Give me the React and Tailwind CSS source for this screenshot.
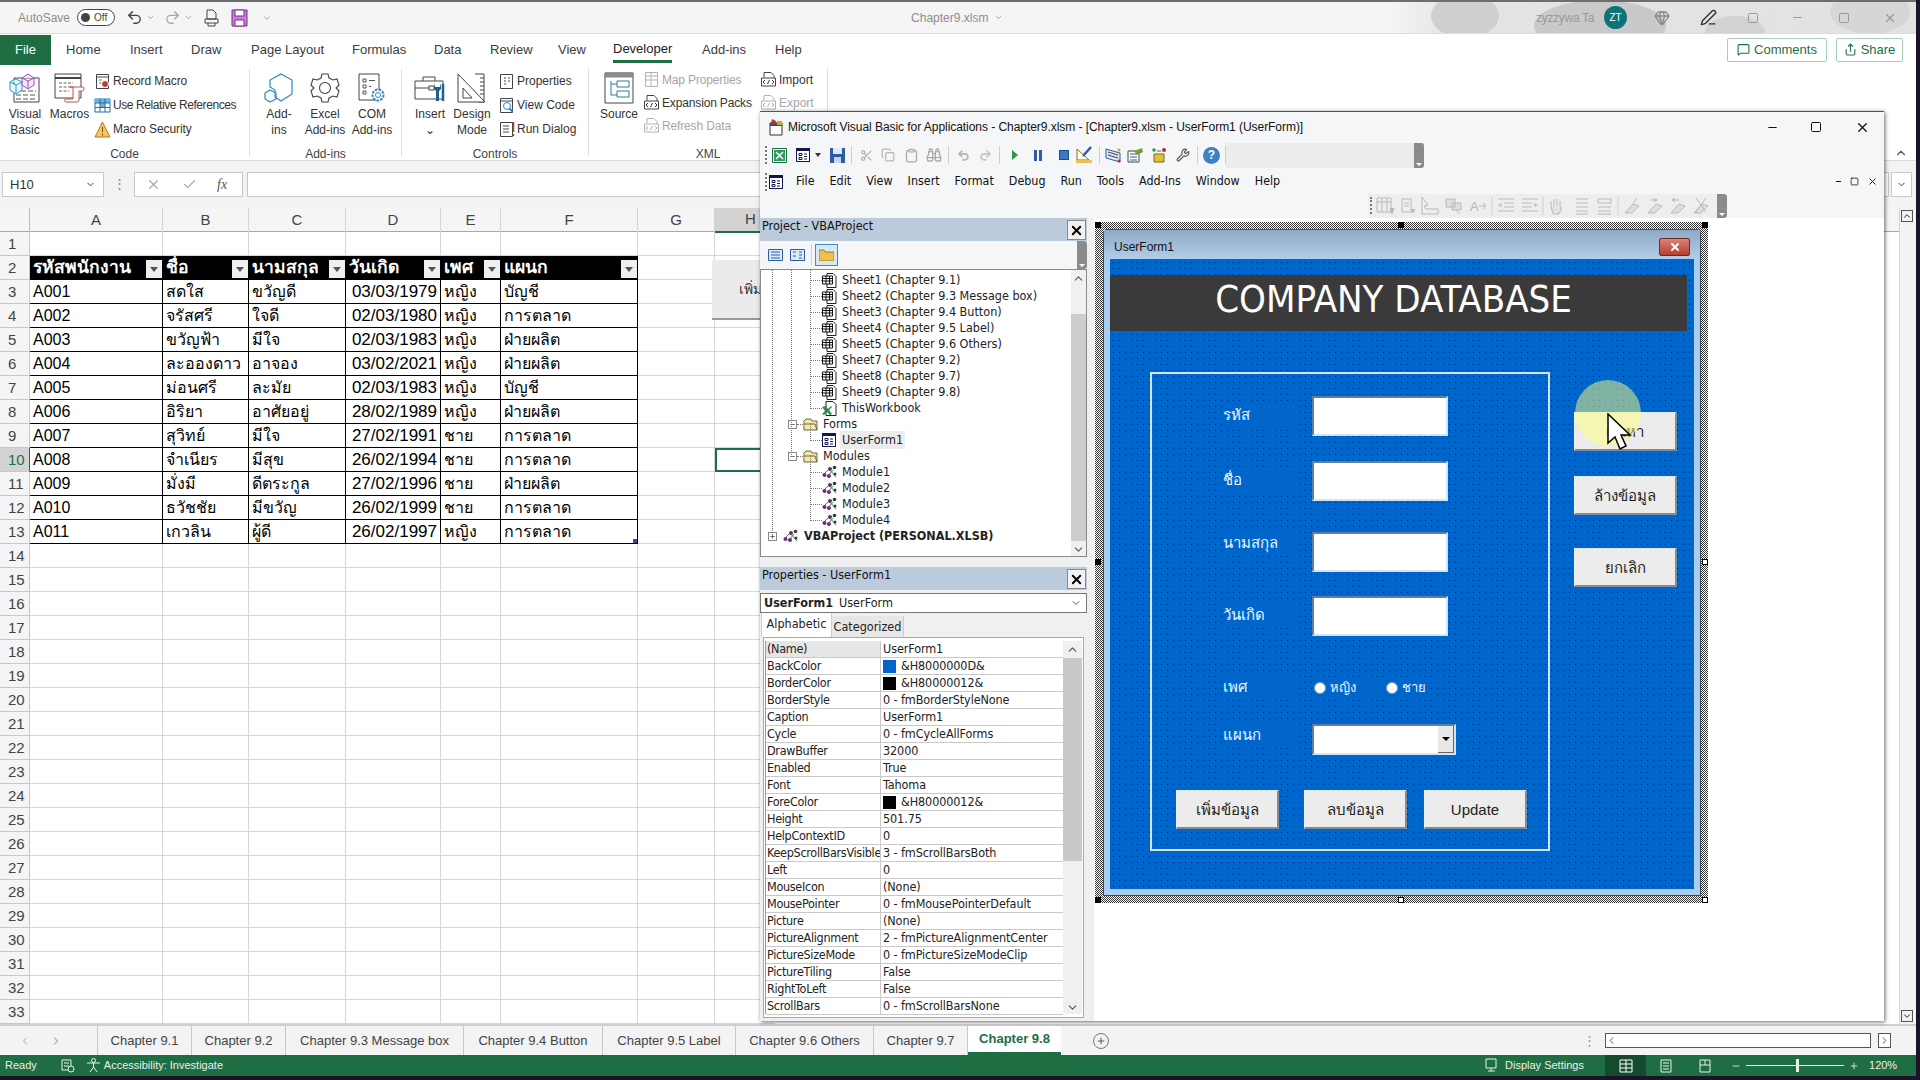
import {
  ChevronDown,
  ChevronUp,
  ChevronLeft,
  ChevronRight,
  Check,
  X,
  Plus,
  Minus,
  Square,
  Undo2,
  Redo2,
  MessageSquare,
  Share,
  Gem,
  PenLine,
  Scissors,
  Copy,
  Clipboard,
  Binoculars,
  Wrench,
} from "lucide-react";

const sheetCols = "grid-cols-[30px_133px_86px_97px_95px_60px_137px_77px_1fr]";
const tahoma = "[font-family:'DejaVu_Sans','Liberation_Sans',sans-serif] [font-stretch:condensed]";

const people = [
  ["A001", "สดใส", "ขวัญดี", "03/03/1979", "หญิง", "บัญชี"],
  ["A002", "จรัสศรี", "ใจดี", "02/03/1980", "หญิง", "การตลาด"],
  ["A003", "ขวัญฟ้า", "มีใจ", "02/03/1983", "หญิง", "ฝ่ายผลิต"],
  ["A004", "ละอองดาว", "อาจอง", "03/02/2021", "หญิง", "ฝ่ายผลิต"],
  ["A005", "ม่อนศรี", "ละมัย", "02/03/1983", "หญิง", "บัญชี"],
  ["A006", "อิริยา", "อาศัยอยู่", "28/02/1989", "หญิง", "ฝ่ายผลิต"],
  ["A007", "สุวิทย์", "มีใจ", "27/02/1991", "ชาย", "การตลาด"],
  ["A008", "จำเนียร", "มีสุข", "26/02/1994", "ชาย", "การตลาด"],
  ["A009", "มั่งมี", "ดีตระกูล", "27/02/1996", "ชาย", "ฝ่ายผลิต"],
  ["A010", "ธวัชชัย", "มีขวัญ", "26/02/1999", "ชาย", "การตลาด"],
  ["A011", "เกวลิน", "ผู้ดี", "26/02/1997", "หญิง", "การตลาด"],
];

const headers = ["รหัสพนักงาน", "ชื่อ", "นามสกุล", "วันเกิด", "เพศ", "แผนก"];

const props = [
  ["(Name)", "UserForm1"],
  ["BackColor", "&H8000000D&", "bg-[#0066cc]"],
  ["BorderColor", "&H80000012&", "bg-black"],
  ["BorderStyle", "0 - fmBorderStyleNone"],
  ["Caption", "UserForm1"],
  ["Cycle", "0 - fmCycleAllForms"],
  ["DrawBuffer", "32000"],
  ["Enabled", "True"],
  ["Font", "Tahoma"],
  ["ForeColor", "&H80000012&", "bg-black"],
  ["Height", "501.75"],
  ["HelpContextID", "0"],
  ["KeepScrollBarsVisible", "3 - fmScrollBarsBoth"],
  ["Left", "0"],
  ["MouseIcon", "(None)"],
  ["MousePointer", "0 - fmMousePointerDefault"],
  ["Picture", "(None)"],
  ["PictureAlignment", "2 - fmPictureAlignmentCenter"],
  ["PictureSizeMode", "0 - fmPictureSizeModeClip"],
  ["PictureTiling", "False"],
  ["RightToLeft", "False"],
  ["ScrollBars", "0 - fmScrollBarsNone"],
];

const tabs = [
  ["Home", "w-[64px]"],
  ["Insert", "w-[61px]"],
  ["Draw", "w-[60px]"],
  ["Page Layout", "w-[101px]"],
  ["Formulas", "w-[82px]"],
  ["Data", "w-[56px]"],
  ["Review", "w-[68px]"],
  ["View", "w-[55px]"],
];

const sheets = [
  ["Chapter 9.1", "w-[94px]"],
  ["Chapter 9.2", "w-[94px]"],
  ["Chapter 9.3 Message box", "w-[178px]"],
  ["Chapter 9.4 Button", "w-[139px]"],
  ["Chapter 9.5 Label", "w-[133px]"],
  ["Chapter 9.6 Others", "w-[138px]"],
  ["Chapter 9.7", "w-[94px]"],
];

const SheetIcon = () => (
  <svg width="15" height="15" viewBox="0 0 15 15" className="shrink-0">
    <path d="M5 0.500h6l3 3v11H5z" fill="#fff" stroke="#222" />
    <path d="M0.500 3h10v8h-10z" fill="#fff" stroke="#111" />
    <path d="M0.500 5.500h10M0.500 8h10M4 3v8M7.500 3v8" stroke="#111" />
  </svg>
);

const WorkbookIcon = () => (
  <svg width="15" height="15" viewBox="0 0 15 15" className="shrink-0">
    <path d="M4 0.500h7l3 3v11H4z" fill="#fff" stroke="#222" />
    <path d="M0 6l4-1 2 3 3-3 1 1-3 3 3 4-2 1-3-3-3 3-2-1 3-3z" fill="#2e8b57" />
  </svg>
);

const ModuleIcon = () => (
  <svg width="16" height="15" viewBox="0 0 16 15" className="shrink-0">
    <path d="M1 10l6-6 7 8M5 12l6-7" fill="none" stroke="#3f8f44" />
    <circle cx="2.500" cy="10" r="2" fill="#6b2d7c" />
    <circle cx="7" cy="11" r="2" fill="#6b2d7c" />
    <circle cx="8" cy="4" r="2" fill="#6b2d7c" />
    <circle cx="12.500" cy="2.500" r="1.800" fill="#3b3b3b" />
    <circle cx="13" cy="9" r="1.500" fill="#3b3b3b" />
  </svg>
);

const FolderIcon = () => (
  <svg width="15" height="13" viewBox="0 0 15 13" className="shrink-0">
    <path d="M1 3l2-2h5l1 2h5v9H1z" fill="#f2e9a6" stroke="#6d6a45" />
    <path d="M1 6h11l2 6" fill="none" stroke="#6d6a45" />
  </svg>
);

const FormIcon = () => (
  <svg width="14" height="14" viewBox="0 0 14 14" className="shrink-0">
    <rect x="0.500" y="0.500" width="13" height="13" fill="#fff" stroke="#16164e" />
    <path d="M1 1h12v2H1z" fill="#16164e" />
    <path d="M3 5.500h3v2H3zM3 9.500h3v2H3zM8 6h3M8 8.500h3M8 11h3" stroke="#16164e" fill="none" />
  </svg>
);

const VisualBasicIcon = () => (
  <svg width="32" height="30" viewBox="0 0 32 30" fill="none">
    <path d="M5 5h25v24H5z" fill="#fff" stroke="#444" />
    <path d="M12 18h15M7 22h20M7 26h20" stroke="#555" strokeDasharray="5 2" />
    <path d="M1 9l6-3 6 3v8l-6 4-6-4zM1 9l6 3 6-3M7 12v9" fill="#e8f5fb" stroke="#2b9ac4" />
    <path d="M13 5l6-4 6 4v7l-6 4-6-4zM13 5l6 3 6-3M19 8v8" fill="#f4e8f7" stroke="#9b4fb5" />
  </svg>
);

const MacrosIcon = () => (
  <svg width="32" height="30" viewBox="0 0 32 30" fill="none">
    <path d="M1 1h26v24H1z" fill="#fff" stroke="#444" />
    <path d="M1 5h26" stroke="#444" strokeWidth="2" />
    <path d="M5 10h14M5 14h12M5 18h10" stroke="#666" strokeDasharray="3 1.500" />
    <path d="M16 14h13c1.500 0 1.500 4-1 4h-3v9c0 2-2 2-3 2H12c-2 0-2.500-3 0-3h7V14z" fill="#fff" stroke="#b5544c" />
  </svg>
);

const HexIcon = () => (
  <svg width="30" height="30" viewBox="0 0 30 30" fill="none" stroke="#2e86c1" strokeWidth="1.200">
    <path d="M17 1l11 6v14l-11 7-6-4v-7l-5-3V7z" />
    <path d="M6 17l6 3v6l-6 3-5-3v-6z" />
  </svg>
);

const GearIcon = () => (
  <svg width="30" height="30" viewBox="0 0 30 30" fill="none" stroke="#444" strokeWidth="1.100">
    <path d="M12 1h6l1 4 4 2 4-1 2 6-3 3 3 3-2 6-4-1-4 2-1 4h-6l-1-4-4-2-4 1-2-6 3-3-3-3 2-6 4 1 4-2z" />
    <circle cx="15" cy="15" r="5.500" />
  </svg>
);

const ComIcon = () => (
  <svg width="30" height="30" viewBox="0 0 30 30" fill="none">
    <path d="M2 1h20v26H2z" fill="#fff" stroke="#444" />
    <path d="M6 6h3v3H6zM6 12h3v3H6zM6 18h3v3H6zM12 7.500h6M12 13.500h2" stroke="#555" />
    <circle cx="21" cy="22" r="5.500" fill="#fff" stroke="#2e86c1" strokeWidth="2" strokeDasharray="2.500 1.200" />
    <circle cx="21" cy="22" r="2.500" stroke="#2e86c1" />
  </svg>
);

const ToolboxIcon = () => (
  <svg width="32" height="28" viewBox="0 0 32 28" fill="none">
    <path d="M1 7h28v18H1zM9 7V3h12v4M1 14h14" stroke="#444" fill="#fff" />
    <path d="M15 12h5v4h-5z" stroke="#444" />
    <path d="M20 9v6l2 2v10h3V17l2-2V9l-1 4h-5z" fill="#1f5f8f" />
    <path d="M29 10v17" stroke="#1f5f8f" strokeWidth="2.500" />
  </svg>
);

const DesignIcon = () => (
  <svg width="30" height="30" viewBox="0 0 30 30" fill="none" stroke="#444">
    <path d="M18 1h9v28h-6" fill="#fff" />
    <path d="M23 5h4M23 9h4M23 13h4M23 17h4M23 21h4" />
    <path d="M1 1l27 28H1z" fill="#fff" />
    <path d="M6 15l9 10H6z" />
  </svg>
);

const SourceIcon = () => (
  <svg width="30" height="32" viewBox="0 0 30 32" fill="none" stroke="#2a7f9c">
    <path d="M1 1h28v30H1z" stroke="#444" fill="#fff" />
    <path d="M1 1h28v4H1z" fill="#8a8a8a" stroke="#8a8a8a" />
    <path d="M13 9h12v6H13zM13 19h12v6H13zM7 9v14h6M7 12h6" />
  </svg>
);

const MiniIcon = ({ children, muted }) => (
  <svg width="17" height="17" viewBox="0 0 17 17" fill="none" className={`shrink-0 ${muted ? "opacity-40" : ""}`}>
    {children}
  </svg>
);

const Doc = () => <path d="M2.500 1.500h12v14h-12z" fill="#fff" stroke="#444" />;

const XmlBadge = () => (
  <>
    <path d="M4 1.500h7l3 3v4M4 1.500v5" stroke="#444" />
    <path d="M1.500 7h14v8h-14z" fill="#fff" stroke="#444" />
    <path d="M5 9l-2 2 2 2M12 9l2 2-2 2M9.500 9l-2 4" stroke="#333" />
  </>
);

const RibbonSmall = ({ icon, label, muted, className = "h-6" }) => (
  <div className={`flex items-center gap-[2px] whitespace-nowrap text-[12px] ${muted ? "text-[#a6a6a6]" : "text-[#333]"} ${className}`}>
    {icon}
    <span>{label}</span>
  </div>
);

const BigButton = ({ icon, lines, width }) => (
  <div className={`flex shrink-0 flex-col items-center pt-[3px] text-[12px] leading-4 text-[#333] ${width}`}>
    <div className="flex h-[32px] items-center">{icon}</div>
    <div className="mt-[2px] text-center whitespace-nowrap">
      {lines.map((l) => (
        <div key={l}>{l}</div>
      ))}
    </div>
  </div>
);

const RibbonGroup = ({ label, width, children }) => (
  <div className={`relative my-[4px] flex shrink-0 flex-col border-r border-[#dcdcdc] ${width}`}>
    <div className="flex h-[77px]">{children}</div>
    <div className="absolute top-[76px] right-0 left-0 text-center text-[12px] text-[#444]">{label}</div>
  </div>
);

function TitleBar() {
  return (
    <div className="relative flex h-[34px] shrink-0 items-center overflow-hidden border-t-2 border-b border-t-[#6e6e6e] border-b-[#dcdcdc] bg-[#f5f5f5] text-[12px] text-[#8d8d8d]">
      <svg className="absolute top-0 left-[1390px]" width="526" height="34" viewBox="0 0 526 34">
        <defs>
          <linearGradient id="fade" x1="0" x2="1" y1="0" y2="0">
            <stop offset="0" stopColor="#f5f5f5" />
            <stop offset="0.12" stopColor="#e4e4e4" />
            <stop offset="1" stopColor="#e2e2e2" />
          </linearGradient>
        </defs>
        <rect width="526" height="34" fill="url(#fade)" />
        <ellipse cx="75" cy="14" rx="34" ry="22" fill="#cfcfcf" />
        <ellipse cx="210" cy="24" rx="66" ry="26" fill="#c9c9c9" />
        <ellipse cx="345" cy="30" rx="30" ry="16" fill="#d2d2d2" />
        <ellipse cx="480" cy="10" rx="40" ry="22" fill="#d6d6d6" />
      </svg>
      <span className="ml-[18px]">AutoSave</span>
      <div className="ml-[7px] flex h-[17px] w-[38px] items-center rounded-full border border-[#444] bg-white pl-[3px] text-[10px] text-[#444]">
        <span className="h-[9px] w-[9px] rounded-full bg-[#444]" />
        <span className="ml-[4px]">Off</span>
      </div>
      <Undo2 size={17} className="ml-[11px] text-[#444]" />
      <ChevronDown size={9} className="ml-[3px]" />
      <Redo2 size={17} className="ml-[9px] text-[#aaa]" />
      <ChevronDown size={9} className="ml-[3px]" />
      <svg width="15" height="18" viewBox="0 0 15 18" fill="none" stroke="#444" className="ml-[11px]">
        <path d="M3 1h6l3 3v6H3zM1 10h13v4H1zM4 14v3h7v-3" />
      </svg>
      <svg width="17" height="18" viewBox="0 0 17 18" className="ml-[12px]">
        <path d="M1 1h15v16H1z" fill="#c77fd6" stroke="#7a2d92" />
        <path d="M4 1h9v6H4zM4 11h9v6H4z" fill="#fff" stroke="#7a2d92" />
      </svg>
      <ChevronDown size={10} className="ml-[14px]" />
      <div className="relative ml-[639px] flex w-[120px] items-center gap-[6px]">
        <span>Chapter9.xlsm</span>
        <ChevronDown size={9} />
      </div>
      <span className="relative ml-[505px] w-[68px] tracking-[-0.3px] text-[#999]">zyzzywa Ta</span>
      <div className="relative flex h-[23px] w-[23px] items-center justify-center rounded-full bg-[#0d7377] text-[10px] text-white">ZT</div>
      <Gem size={16} className="relative ml-[27px] text-[#888]" />
      <PenLine size={17} className="relative ml-[30px] text-[#333]" />
      <Square size={12} className="relative ml-[30px] text-[#999]" />
      <Minus size={13} className="relative ml-[32px] text-[#999]" />
      <Square size={12} className="relative ml-[34px] text-[#999]" />
      <X size={14} className="relative ml-[33px] text-[#999]" />
    </div>
  );
}

function TabStrip() {
  return (
    <div className="flex h-[31px] shrink-0 items-center bg-white text-[13px] text-[#3c3c3c]">
      <div className="flex h-[30px] w-[51px] items-center justify-center bg-[#1f6e43] text-white">File</div>
      <div className="flex pl-[15px]">
        {tabs.map(([t, w]) => (
          <span key={t} className={w}>{t}</span>
        ))}
      </div>
      <div className="w-[89px] pt-[3px]">
        <span className="inline-block border-b-[3px] border-[#1f6e43] pb-[1px] font-medium text-[#222]">Developer</span>
      </div>
      <span className="w-[73px]">Add-ins</span>
      <span>Help</span>
      <div className="mr-[13px] ml-auto flex gap-[9px] text-[#1f6e43]">
        <div className="flex h-[24px] w-[100px] items-center justify-center gap-[4px] rounded-[2px] border border-[#a9cdb9]">
          <MessageSquare size={13} /> Comments
        </div>
        <div className="flex h-[24px] w-[67px] items-center justify-center gap-[4px] rounded-[2px] border border-[#a9cdb9]">
          <Share size={13} /> Share
        </div>
      </div>
    </div>
  );
}

function Ribbon() {
  return (
    <div className="flex h-[96px] shrink-0 border-b border-[#d9d9d9] bg-white">
      <RibbonGroup label="Code" width="w-[250px]">
        <div className="flex pl-[8px]">
          <BigButton icon={<VisualBasicIcon />} lines={["Visual", "Basic"]} width="w-[34px]" />
        </div>
        <div className="ml-[5px]">
          <BigButton icon={<MacrosIcon />} lines={["Macros"]} width="w-[45px]" />
        </div>
        <div className="ml-[2px] tracking-[-0.1px]">
          <RibbonSmall label="Record Macro" icon={<MiniIcon><Doc /><path d="M3 4h11" stroke="#444" /><path d="M5 7h3M5 10h2" stroke="#777" /><circle cx="11" cy="11" r="3.500" fill="#c0392b" stroke="#fff" /></MiniIcon>} />
          <div className="tracking-[-0.42px]">
            <RibbonSmall label="Use Relative References" icon={<MiniIcon><path d="M1 2h15v13H1z" fill="#fff" stroke="#1c6fa8" /><path d="M1 2h15v4H1zM6 6h5v4H6z" fill="#6fb2e0" /><path d="M1 6h15M1 10.500h15M6 2v13M11 2v13" stroke="#1c6fa8" /></MiniIcon>} />
          </div>
          <RibbonSmall label="Macro Security" icon={<MiniIcon><path d="M8.500 1L16 16H1z" fill="#f6c65b" stroke="#b7791f" /><path d="M8.500 6v5M8.500 12.500v2" stroke="#7a4a00" /></MiniIcon>} />
        </div>
      </RibbonGroup>
      <RibbonGroup label="Add-ins" width="w-[152px]">
        <div className="flex pl-[6px]">
          <BigButton icon={<HexIcon />} lines={["Add-", "ins"]} width="w-[46px]" />
          <BigButton icon={<GearIcon />} lines={["Excel", "Add-ins"]} width="w-[46px]" />
          <BigButton icon={<ComIcon />} lines={["COM", "Add-ins"]} width="w-[48px]" />
        </div>
      </RibbonGroup>
      <RibbonGroup label="Controls" width="w-[187px]">
        <div className="flex pl-[8px]">
          <BigButton icon={<ToolboxIcon />} lines={["Insert", "⌄"]} width="w-[40px]" />
          <BigButton icon={<DesignIcon />} lines={["Design", "Mode"]} width="w-[44px]" />
        </div>
        <div className="ml-[4px]">
          <RibbonSmall label="Properties" icon={<MiniIcon><Doc /><path d="M6 5h2M6 8h2M6 11h2M10 5h2M10 8h2" stroke="#444" /></MiniIcon>} />
          <RibbonSmall label="View Code" icon={<MiniIcon><Doc /><path d="M3 4h11" stroke="#444" /><circle cx="9" cy="9" r="3.500" stroke="#2e86c1" /><path d="M11.500 11.500l3 3" stroke="#2e86c1" strokeWidth="2" /></MiniIcon>} />
          <RibbonSmall label="Run Dialog" icon={<MiniIcon><Doc /><path d="M5 5h6M5 8h6M5 11h6" stroke="#444" /><path d="M15.500 1v10M15.500 13v2" stroke="#c0392b" strokeWidth="1.500" /></MiniIcon>} />
        </div>
      </RibbonGroup>
      <RibbonGroup label="XML" width="w-[239px]">
        <div className="w-[54px]">
          <BigButton icon={<SourceIcon />} lines={["Source"]} width="w-[60px]" />
        </div>
        <div className="mt-[-1px] w-[117px] tracking-[-0.15px]">
          <RibbonSmall muted className="h-[23px]" label="Map Properties" icon={<MiniIcon muted><Doc /><path d="M3 5h11M3 9h11M8 1v14" stroke="#444" /></MiniIcon>} />
          <RibbonSmall className="h-[23px]" label="Expansion Packs" icon={<MiniIcon><XmlBadge /></MiniIcon>} />
          <RibbonSmall muted className="h-[23px]" label="Refresh Data" icon={<MiniIcon muted><XmlBadge /></MiniIcon>} />
        </div>
        <div className="mt-[-1px]">
          <RibbonSmall className="h-[23px]" label="Import" icon={<MiniIcon><XmlBadge /></MiniIcon>} />
          <RibbonSmall muted className="h-[23px]" label="Export" icon={<MiniIcon muted><XmlBadge /></MiniIcon>} />
        </div>
      </RibbonGroup>
      <div className="ml-auto flex items-end pr-[8px]">
        <ChevronUp size={14} className="text-[#555]" />
      </div>
    </div>
  );
}

function FormulaBar() {
  return (
    <div className="flex h-[47px] shrink-0 items-start bg-[#f3f3f3] pt-[11px] pl-[2px] text-[13px] text-[#333]">
      <div className="flex h-[25px] w-[102px] items-center justify-between border border-[#c8c8c8] bg-white px-[7px]">
        H10 <ChevronDown size={11} />
      </div>
      <span className="w-[30px] text-center leading-6 text-[#888]">⋮</span>
      <div className="flex h-[25px] w-[109px] items-center border border-[#c8c8c8] bg-white text-[#aaa]">
        <X size={15} className="ml-[11px]" />
        <Check size={15} className="ml-[21px]" />
        <span className="ml-[20px] font-['Liberation_Serif'] text-[14px] text-[#555] italic">fx</span>
      </div>
      <div className="ml-[4px] h-[25px] flex-1 border border-[#c8c8c8] bg-white" />
      <div className="mr-[4px] ml-[2px] flex h-[25px] w-[21px] items-center justify-center border border-[#c8c8c8] bg-white">
        <ChevronDown size={11} />
      </div>
    </div>
  );
}

function SpreadSheet() {
  const letters = ["A", "B", "C", "D", "E", "F", "G"];
  const gridLine = "border-r border-b border-[#d6d6d6]";
  return (
    <div className="flex h-[816px] shrink-0 bg-white">
      <div className="flex-1 overflow-hidden">
        <div className={`grid h-[24px] ${sheetCols} border-b border-[#a8a8a8] bg-[#f5f5f5] text-[15px] text-[#444]`}>
          <div className="border-r border-[#bbb]" />
          {letters.map((c) => (
            <div key={c} className="flex items-center justify-center border-r border-[#d6d6d6]">{c}</div>
          ))}
          <div className="w-[45px] border-b-2 border-[#1f6e43] bg-[#d3d3d3] pl-[30px] text-[#444]">H</div>
        </div>
        {Array.from({ length: 33 }, (_, i) => {
          const rowNo = i + 1;
          const record = rowNo >= 3 && rowNo <= 13 ? people[rowNo - 3] : null;
          const isHead = rowNo === 2;
          return (
            <div key={rowNo} className={`grid h-[24px] ${sheetCols} text-[16px] leading-[23px] text-black`}>
              <div className={`border-r border-b border-[#c8c8c8] pl-[8px] text-[15px] ${rowNo === 10 ? "border-r-[#1f6e43] bg-[#d3d3d3] text-[#1f6e43]" : "bg-[#f5f5f5] text-[#444]"}`}>{rowNo}</div>
              {[0, 1, 2, 3, 4, 5].map((c) => {
                if (isHead) {
                  return (
                    <div key={c} className="relative overflow-hidden border-b border-black bg-black pl-[3px] text-[17.5px] font-bold whitespace-nowrap text-white">
                      {headers[c]}
                      <span className="absolute top-[4px] right-[1px] flex h-[18px] w-[16px] items-center justify-center bg-[#efefef]">
                        <span className="border-x-[4px] border-t-[5px] border-x-transparent border-t-[#555]" />
                      </span>
                    </div>
                  );
                }
                if (record) {
                  return (
                    <div key={c} className={`relative overflow-hidden border-r border-b border-black whitespace-nowrap ${c === 3 ? "pr-[3px] text-right text-[17px]" : "pl-[3px]"}`}>
                      {record[c]}
                      {rowNo === 13 && c === 5 && <span className="absolute right-0 bottom-0 h-[4px] w-[4px] bg-[#3b4a8c]" />}
                    </div>
                  );
                }
                return <div key={c} className={gridLine} />;
              })}
              <div className={gridLine} />
              <div className={rowNo === 10 ? "w-[60px] border-2 border-[#1f6e43]" : "w-[60px] border-b border-[#d6d6d6]"} />
            </div>
          );
        })}
      </div>
      <div className="flex w-[17px] flex-col items-center justify-between border-l border-[#d6d6d6] bg-[#f3f3f3] py-[2px] pr-[3px]">
        <ChevronUp size={12} className="border border-[#555]" />
        <ChevronDown size={12} className="border border-[#555]" />
      </div>
    </div>
  );
}

function SheetTabs() {
  return (
    <div className="flex h-[31px] shrink-0 items-center border-t-2 border-[#cfcfcf] bg-[#f3f3f3] text-[13px] text-[#444]">
      <ChevronLeft size={12} className="ml-[19px] text-[#aaa]" />
      <ChevronRight size={12} className="ml-[19px] text-[#888]" />
      <div className="ml-[35px] flex h-full items-stretch border-l border-[#c8c8c8]">
        {sheets.map(([s, w]) => (
          <div key={s} className={`flex items-center justify-center border-r border-[#c8c8c8] whitespace-nowrap ${w}`}>{s}</div>
        ))}
        <div className="flex w-[93px] items-center justify-center border-b-[3px] border-[#1f6e43] bg-white font-bold text-[#1f6e43]">Chapter 9.8</div>
      </div>
      <div className="ml-[32px] flex h-[16px] w-[16px] items-center justify-center rounded-full border border-[#777]">
        <Plus size={10} />
      </div>
      <span className="ml-[474px] text-[#999]">⋮</span>
      <div className="ml-[9px] flex h-[15px] w-[266px] items-center justify-between border border-[#555] bg-white">
        <ChevronLeft size={11} />
      </div>
      <div className="ml-[7px] flex h-[15px] w-[13px] items-center justify-center border border-[#555] bg-white">
        <ChevronRight size={11} />
      </div>
    </div>
  );
}

function StatusBar() {
  return (
    <div className="flex h-[21px] shrink-0 items-center bg-[#1f6e43] text-[11px] text-[#e8f1ec]">
      <span className="ml-[5px]">Ready</span>
      <svg width="14" height="14" viewBox="0 0 14 14" fill="none" stroke="#e8f1ec" className="ml-[24px]">
        <path d="M1 1h9v10H1zM3 4h5M3 7h5" />
        <circle cx="10" cy="10" r="3" fill="#1f6e43" />
      </svg>
      <svg width="15" height="15" viewBox="0 0 15 15" fill="none" stroke="#e8f1ec" className="ml-[11px]">
        <circle cx="7.500" cy="2.500" r="2" />
        <path d="M1 5h13M7.500 5v4L4 14M7.500 9l3.500 5" />
      </svg>
      <span className="ml-[3px]">Accessibility: Investigate</span>
      <svg width="16" height="15" viewBox="0 0 16 15" fill="none" stroke="#e8f1ec" className="ml-[1262px]">
        <path d="M1 1h10v9H1zM6 10v3M3 13h7" />
      </svg>
      <span className="ml-[4px] w-[100px]">Display Settings</span>
      <div className="flex h-full w-[41px] items-center justify-center bg-[#144a2d]">
        <svg width="14" height="14" viewBox="0 0 14 14" fill="none" stroke="#fff"><path d="M1 1h12v12H1zM1 5h12M1 9h12M7 1v12" /></svg>
      </div>
      <svg width="14" height="14" viewBox="0 0 14 14" fill="none" stroke="#e8f1ec" className="ml-[13px]"><path d="M2 1h10v12H2zM4 4h6M4 7h6M4 10h6" /></svg>
      <svg width="14" height="14" viewBox="0 0 14 14" fill="none" stroke="#e8f1ec" className="ml-[25px]"><path d="M2 1h10v12H2zM2 6h10M7 1v5" /></svg>
      <Minus size={10} className="ml-[19px]" />
      <div className="relative ml-[5px] h-[1px] w-[98px] bg-[#e8f1ec]">
        <span className="absolute top-[-6px] left-[50px] h-[13px] w-[3px] bg-[#e8f1ec]" />
      </div>
      <Plus size={10} className="ml-[5px]" />
      <span className="ml-[10px]">120%</span>
    </div>
  );
}

const GripEnd = () => (
  <div className="flex h-full w-[10px] shrink-0 items-end justify-center rounded-r-[3px] bg-[#8b8b8b] pb-[2px]">
    <span className="border-x-[3px] border-t-[3px] border-x-transparent border-t-white" />
  </div>
);

const Sep = ({ className = "" }) => <span className={`h-[18px] border-l border-[#cfcfcf] ${className}`} />;

const Grip = () => <span className="h-[18px] w-[3px] border-l-2 border-dotted border-[#777]" />;

// Faded edit toolbar, all one drawing since the icons are near-identical grey marks
const EditToolbarIcons = () => (
  <svg width="340" height="20" viewBox="0 0 340 20" fill="none" stroke="#b9b9b9" className="shrink-0">
    <path d="M3 2h14v14H3zM3 6h14M8 2v14M13 2v14" />
    <path d="M16 12l2 6 2-6" fill="#b9b9b9" />
    <path d="M28 3h9v13h-9zM30 7h5M30 10h5" />
    <path d="M37 13l2 4 2-4" fill="#b9b9b9" />
    <path d="M48 1l6 8-4 1 2 3h12v5H48z" />
    <path d="M72 3h9v8h-9zM78 7h9v7h-9zM82 14l4 4" fill="#dedede" />
    <text x="96" y="15" fontSize="13" fill="#b9b9b9" stroke="none" fontFamily="Liberation Sans">A</text>
    <path d="M105 10h6M109 7l3 3-3 3" />
    <path d="M118 1v18" stroke="#cfcfcf" />
    <path d="M124 3h16M130 7h10M130 11h10M124 15h16M124 9h4M126 7l2 2-2 2" />
    <path d="M148 3h16M148 7h10M148 11h10M148 15h16M164 9h-4M162 7l-2 2 2 2" />
    <path d="M169 1v18" stroke="#cfcfcf" />
    <path d="M177 10V5M180 10V3M183 10V3M186 10V5M177 10l2 8h6l2-4v-4" fill="#e2e2e2" />
    <path d="M202 3h12M202 7h12M202 11h12M202 15h12M202 18h12" />
    <path d="M224 3h13v4h-13zM224 11h13M224 15h13M224 18h13" />
    <path d="M244 1v18" stroke="#cfcfcf" />
    <path d="M251 17l8-9 6 2-7 7zM259 8l4-6" fill="#dedede" />
    <path d="M274 17l8-9 6 2-7 7zM276 4h6M280 2l3 2-3 2" fill="#dedede" />
    <path d="M297 17l8-9 6 2-7 7zM299 4h6M301 2l-3 2 3 2" fill="#dedede" />
    <path d="M320 17l8-9 6 2-7 7zM322 2l10 14M332 2l-10 14" fill="#dedede" />
  </svg>
);

function VbaChrome() {
  return (
    <>
      <div className="flex h-[30px] shrink-0 items-center text-[12px] tracking-[-0.05px] text-[#111]">
        <svg width="16" height="18" viewBox="0 0 16 18" className="ml-[8px]">
          <path d="M2 5h12v12H2z" fill="#fff" stroke="#333" />
          <path d="M2 5h12v3H2z" fill="#1b4f8a" />
          <path d="M4 1l4 2-2 5-3-2z" fill="#b3312a" />
          <path d="M9 3h5v4H9z" fill="#d9a61f" />
        </svg>
        <span className="ml-[4px]">Microsoft Visual Basic for Applications - Chapter9.xlsm - [Chapter9.xlsm - UserForm1 (UserForm)]</span>
        <Minus size={13} className="ml-auto" />
        <Square size={12} className="ml-[31px]" />
        <X size={15} className="mr-[14px] ml-[33px]" />
      </div>
      <div className="flex h-[26px] shrink-0 items-center pl-[5px]">
        <Grip />
        <svg width="15" height="15" viewBox="0 0 15 15" className="ml-[4px]"><path d="M0.500 0.500h14v14h-14z" fill="#fff" stroke="#1f6e43" /><path d="M2 2h11v11H2z" fill="#2e9a5b" /><path d="M4 4l7 7M11 4l-7 7" stroke="#fff" strokeWidth="1.500" /></svg>
        <span className="ml-[9px]"><FormIcon /></span>
        <span className="ml-[5px] border-x-[3px] border-t-[4px] border-x-transparent border-t-[#333]" />
        <svg width="15" height="15" viewBox="0 0 15 15" className="ml-[9px]"><path d="M0 0h15v15H0z" fill="#2a5ca8" /><path d="M3 0h9v6H3z" fill="#dfe8f5" /><path d="M4 9h7v6H4z" fill="#c7d4ea" /></svg>
        <Sep className="ml-[6px]" />
        <Scissors size={13} className="ml-[8px] text-[#aaa]" />
        <Copy size={14} className="ml-[8px] text-[#b5b5b5]" />
        <Clipboard size={15} className="ml-[9px] text-[#aaa]" />
        <Binoculars size={16} className="ml-[7px] text-[#aaa]" />
        <Sep className="ml-[6px]" />
        <Undo2 size={13} strokeWidth={3} className="ml-[8px] text-[#b5b5b5]" />
        <Redo2 size={13} strokeWidth={3} className="ml-[9px] text-[#c5c5c5]" />
        <Sep className="ml-[7px]" />
        <span className="ml-[12px] border-y-[5px] border-l-[6px] border-y-transparent border-l-[#2e9a3f]" />
        <span className="ml-[16px] flex gap-[2px]"><i className="h-[11px] w-[3px] bg-[#2a5ca8]" /><i className="h-[11px] w-[3px] bg-[#2a5ca8]" /></span>
        <span className="ml-[17px] h-[10px] w-[10px] border border-[#1b4f8a] bg-[#3f76c4]" />
        <svg width="16" height="18" viewBox="0 0 16 18" className="ml-[7px]"><path d="M1 3l12 11H1z" fill="#fff" stroke="#8a6d0c" /><path d="M0 14h16v3H0z" fill="#e6c14d" /><path d="M7 10l8-9" stroke="#2a5ca8" strokeWidth="2.500" /></svg>
        <Sep className="ml-[7px]" />
        <svg width="16" height="16" viewBox="0 0 16 16" className="ml-[5px]"><path d="M1 2l14 4v9L1 11z" fill="#dbe5f3" stroke="#2a5ca8" /><path d="M3 5l10 3M3 8l10 3" stroke="#444" /><circle cx="14" cy="3" r="1.500" fill="#d9a61f" /><circle cx="14" cy="14" r="1.500" fill="#b3312a" /></svg>
        <svg width="17" height="16" viewBox="0 0 17 16" className="ml-[6px]"><path d="M1 4h11v11H1z" fill="#fff" stroke="#444" /><path d="M3 7h7M3 10h7M3 13h7" stroke="#2a5ca8" /><path d="M7 4l8-3 1 4-6 3z" fill="#7d9a3a" /></svg>
        <svg width="16" height="16" viewBox="0 0 16 16" className="ml-[7px]"><path d="M3 7h10v8H3z" fill="#e0c23a" stroke="#7a6a12" /><circle cx="3" cy="3" r="1.800" fill="#2e9a3f" /><path d="M6 4h4" stroke="#555" /><circle cx="13" cy="3" r="2" fill="#b3312a" /></svg>
        <Wrench size={14} className="ml-[9px] text-[#555]" />
        <Sep className="ml-[7px]" />
        <span className="ml-[5px] flex h-[17px] w-[17px] items-center justify-center rounded-full bg-[#3f7fc4] text-[12px] font-bold text-white">?</span>
        <Sep className="ml-[5px]" />
        <div className="flex h-[25px] w-[198px] justify-end bg-[#ececec]"><GripEnd /></div>
      </div>
      <div className={`flex h-[25px] shrink-0 items-center pt-[2px] pl-[5px] text-[12.4px] text-[#111] ${tahoma}`}>
        <Grip />
        <span className="ml-[1px]"><FormIcon /></span>
        <div className="ml-[13px] flex gap-[15px]">
          {["File", "Edit", "View", "Insert", "Format", "Debug", "Run", "Tools", "Add-Ins", "Window", "Help"].map((m) => (
            <span key={m}>{m}</span>
          ))}
        </div>
        <div className="mr-[6px] ml-auto flex items-center gap-[8px]">
          <Minus size={7} strokeWidth={4} />
          <Square size={9} strokeWidth={2} />
          <X size={11} strokeWidth={2} />
        </div>
      </div>
      <div className="flex h-[25px] shrink-0 items-start justify-end pt-[1px]">
        <div className="mr-[157px] flex h-[24px] w-[359px] items-center rounded-r-[3px] bg-[#eeeeee]">
          <span className="ml-[2px]"><Grip /></span>
          <span className="ml-[2px]"><EditToolbarIcons /></span>
          <span className="ml-auto h-full"><GripEnd /></span>
        </div>
      </div>
    </>
  );
}

const PaneTitle = ({ text }) => (
  <div className={`flex h-[23px] shrink-0 justify-between bg-[#bccbdc] pr-[1px] pl-[2px] text-[12.5px] leading-[16px] text-[#111] ${tahoma}`}>
    {text}
    <span className="mt-[2px] flex h-[20px] w-[19px] items-center justify-center border border-[#888] bg-[#f2f2f2]">
      <X size={15} strokeWidth={3} className="text-black" />
    </span>
  </div>
);

function ProjectPane() {
  const line = "h-[1px] border-t border-dotted border-[#777]";
  const vert = "absolute border-l border-dotted border-[#777]";
  const sheetNames = ["Sheet1 (Chapter 9.1)", "Sheet2 (Chapter 9.3 Message box)", "Sheet3 (Chapter 9.4 Button)", "Sheet4 (Chapter 9.5 Label)", "Sheet5 (Chapter 9.6 Others)", "Sheet7 (Chapter 9.2)", "Sheet8 (Chapter 9.7)", "Sheet9 (Chapter 9.8)", "ThisWorkbook"];
  return (
    <div className={`h-[349px] shrink-0 text-[12.5px] ${tahoma}`}>
      <PaneTitle text="Project - VBAProject" />
      <div className="flex h-[28px] items-center bg-[#f5f6f7] pl-[8px]">
        <svg width="15" height="12" viewBox="0 0 15 12"><path d="M0.500 0.500h14v11h-14z" fill="#dfe9f5" stroke="#2a5ca8" /><path d="M3 3h9M3 6h9M3 9h9" stroke="#2a5ca8" /></svg>
        <svg width="15" height="12" viewBox="0 0 15 12" className="ml-[7px]"><path d="M0.500 0.500h14v11h-14z" fill="#dfe9f5" stroke="#2a5ca8" /><path d="M3 3h3M3 7h3M9 3h3M9 6h3M9 9h3" stroke="#2a5ca8" /></svg>
        <span className="ml-[6px] h-[20px] border-l border-[#cfcfcf]" />
        <span className="ml-[3px] flex h-[22px] w-[23px] items-center justify-center border border-[#3d8cc4] bg-[#d6e9f7]">
          <svg width="15" height="12" viewBox="0 0 15 12"><path d="M0 1h5l1 2h9v9H0z" fill="#efc04a" stroke="#a57d17" /></svg>
        </span>
        <span className="ml-auto h-full"><GripEnd /></span>
      </div>
      <div className="flex h-[288px] border border-[#8a8a8a] bg-white text-[#222]">
        <div className="relative flex-1 overflow-hidden pt-[2px] whitespace-nowrap">
          <span className={`${vert} top-0 left-[11px] h-[265px]`} />
          <span className={`${vert} top-0 left-[30px] h-[185px]`} />
          <span className={`${vert} top-0 left-[49px] h-[137px]`} />
          <span className={`${vert} top-[153px] left-[49px] h-[16px]`} />
          <span className={`${vert} top-[185px] left-[49px] h-[64px]`} />
          {sheetNames.map((t) => (
            <div key={t} className="flex h-4 items-center">
              <span className={`ml-[49px] w-[12px] ${line}`} />
              {t === "ThisWorkbook" ? <WorkbookIcon /> : <SheetIcon />}
              <span className="ml-[5px]">{t}</span>
            </div>
          ))}
          {[["Forms", ["UserForm1"]], ["Modules", ["Module1", "Module2", "Module3", "Module4"]]].map(([group, kids]) => (
            <div key={group}>
              <div className="flex h-4 items-center pl-[27px]">
                <span className="flex h-[9px] w-[9px] items-center justify-center border border-[#888] bg-white"><Minus size={7} /></span>
                <span className={`w-[6px] ${line}`} />
                <FolderIcon />
                <span className="ml-[5px]">{group}</span>
              </div>
              {kids.map((k) => (
                <div key={k} className="flex h-4 items-center">
                  <span className={`ml-[49px] w-[12px] ${line}`} />
                  {group === "Forms" ? <span className="flex w-[14px] justify-center"><FormIcon /></span> : <ModuleIcon />}
                  <span className={`px-[2px] ${group === "Forms" ? "ml-[4px] bg-[#ececec]" : "ml-[2px]"}`}>{k}</span>
                </div>
              ))}
            </div>
          ))}
          <div className="flex h-4 items-center pl-[7px] font-bold">
            <span className="flex h-[9px] w-[9px] items-center justify-center border border-[#888] bg-white"><Plus size={7} /></span>
            <span className="ml-[6px]"><ModuleIcon /></span>
            <span className="ml-[5px]">VBAProject (PERSONAL.XLSB)</span>
          </div>
        </div>
        <div className="flex w-[15px] flex-col items-center bg-[#f0f0f0] text-[#555]">
          <ChevronUp size={13} className="mt-[2px]" />
          <div className="mt-[29px] h-[229px] w-full bg-[#cdcdcd]" />
          <ChevronDown size={13} className="mt-[2px]" />
        </div>
      </div>
    </div>
  );
}

function PropertiesPane() {
  return (
    <div className={`flex-1 bg-[#f0f0f0] text-[12.5px] text-[#222] ${tahoma}`}>
      <PaneTitle text="Properties - UserForm1" />
      <div className="mt-[3px] flex h-[20px] items-center border border-[#777] bg-white pl-[3px]">
        <b>UserForm1</b>
        <span className="ml-[6px]">UserForm</span>
        <ChevronDown size={12} className="mr-[4px] ml-auto text-[#555]" />
      </div>
      <div className="flex h-[24px] items-end pl-[1px]">
        <div className="flex h-[24px] w-[71px] items-center justify-center border-x border-[#ccc] bg-white pb-[1px]">Alphabetic</div>
        <div className="flex h-[21px] w-[72px] items-center justify-center border-r border-[#ccc] bg-[#e7e7e7] pt-[2px]">Categorized</div>
      </div>
      <div className="mx-[3px] flex h-[381px] border border-[#a8a8a8] bg-white px-[1px] py-[3px]">
        <div className="w-[298px] border-l border-[#999]">
          {props.map(([name, val, swatch]) => (
            <div key={name} className="flex h-[17px] border-b border-[#c9c9c9] leading-[16px]">
              <div className={`w-[115px] shrink-0 overflow-hidden border-r border-[#c9c9c9] pl-[1px] tracking-[-0.3px] whitespace-nowrap ${name === "(Name)" ? "bg-[#e6e6e6]" : ""}`}>{name}</div>
              <div className="flex items-center pl-[2px] tracking-[-0.1px] whitespace-nowrap">
                {swatch && <span className={`mr-[5px] h-[13px] w-[13px] ${swatch}`} />}
                {val}
              </div>
            </div>
          ))}
        </div>
        <div className="flex flex-1 flex-col items-center bg-[#f0f0f0] text-[#555]">
          <ChevronUp size={13} className="mt-[2px]" />
          <div className="mt-[2px] h-[203px] w-full bg-[#c8c8c8]" />
          <ChevronDown size={13} className="mt-auto" />
        </div>
      </div>
    </div>
  );
}

const FormButton = ({ children, className = "" }) => (
  <div className={`flex h-[39px] w-[103px] shrink-0 items-center justify-center border-t border-r-2 border-b-2 border-l border-t-[#dde6ee] border-r-[#7f8d9b] border-b-[#7f8d9b] border-l-[#eef2f6] bg-[#ececec] pt-[2px] text-[15px] text-[#222] ${className}`}>
    {children}
  </div>
);

const FormInput = ({ className = "" }) => (
  <div className={`border-2 border-t-[#5f7f9f] border-r-[#d3e4f4] border-b-[#d3e4f4] border-l-[#5f7f9f] bg-white ${className}`} />
);

const FormLabel = ({ children, className = "" }) => (
  <div className={`w-[89px] shrink-0 ${className}`}>
    <div className="w-[72px] bg-[#0066cc] text-[15px] leading-[22px] text-[#eef5fc]">{children}</div>
  </div>
);

const Radio = ({ label, className = "" }) => (
  <div className={`flex items-center bg-[#0066cc] text-[13px] text-[#eef5fc] ${className}`}>
    <span className="h-[12px] w-[12px] rounded-full border border-[#7a9bc0] bg-white" />
    <span className="ml-[4px]">{label}</span>
  </div>
);

const Handle = ({ className, dark }) => (
  <span className={`absolute h-[6px] w-[6px] border border-black ${dark ? "bg-black" : "bg-white"} ${className}`} />
);

function DesignSurface() {
  const dots = "bg-[#0066cc] bg-[radial-gradient(circle_at_3.5px_3.5px,#001a3d_0.6px,transparent_0.8px)] bg-[length:6px_6px]";
  return (
    <div className="flex-1 overflow-hidden bg-white pt-[4px] pl-[1px]">
      <div className="relative h-[681px] w-[613px] bg-[repeating-conic-gradient(#333_0_25%,#fff_0_50%)] bg-[length:2px_2px] pt-[7px] pl-[8px]">
        <Handle dark className="top-0 left-0" />
        <Handle dark className="top-0 left-[303px]" />
        <Handle dark className="top-0 right-0" />
        <Handle dark className="top-[337px] left-0" />
        <Handle className="top-[337px] right-0" />
        <Handle dark className="bottom-0 left-0" />
        <Handle className="bottom-0 left-[303px]" />
        <Handle className="right-0 bottom-0" />
        <div className="flex h-[667px] w-[598px] flex-col rounded-t-[4px] border border-[#3f4a55] bg-[#a9cdee]">
          <div className="flex h-[29px] shrink-0 items-center justify-between bg-gradient-to-b from-[#8fa9c6] to-[#b1cdea] px-[10px] pt-[4px] text-[12px] text-[#111]">
            UserForm1
            <span className="flex h-[18px] w-[31px] items-center justify-center rounded-[2px] border border-[#6e2a24] bg-gradient-to-b from-[#d8827a] to-[#b63d30]">
              <X size={12} strokeWidth={4} className="text-white" />
            </span>
          </div>
          <div className={`mx-[6px] flex h-[630px] flex-col ${dots}`}>
            <div className="mt-[16px] mr-[7px] flex h-[56px] shrink-0 justify-center bg-[#3a3a3a] pt-[3px] pr-[10px] text-[38px] leading-[42px] text-white [font-family:'DejaVu_Sans',sans-serif] [font-stretch:condensed]">
              COMPANY DATABASE
            </div>
            <div className="mt-[41px] flex">
              <div className="ml-[40px] flex h-[479px] w-[400px] shrink-0 flex-col border-2 border-[#d5e4f3]">
                <div className="mt-[22px] flex pl-[71px]">
                  <FormLabel className="mt-[8px]">รหัส</FormLabel>
                  <FormInput className="h-[40px] w-[136px]" />
                </div>
                <div className="mt-[25px] flex pl-[71px]">
                  <FormLabel className="mt-[8px]">ชื่อ</FormLabel>
                  <FormInput className="h-[40px] w-[136px]" />
                </div>
                <div className="mt-[31px] flex pl-[71px]">
                  <FormLabel>นามสกุล</FormLabel>
                  <FormInput className="h-[40px] w-[136px]" />
                </div>
                <div className="mt-[24px] flex pl-[71px]">
                  <FormLabel className="mt-[8px]">วันเกิด</FormLabel>
                  <FormInput className="h-[40px] w-[136px]" />
                </div>
                <div className="mt-[42px] flex h-[20px] items-center pl-[71px]">
                  <FormLabel className="mt-[-2px]">เพศ</FormLabel>
                  <Radio label="หญิง" className="ml-[2px] w-[72px]" />
                  <Radio label="ชาย" />
                </div>
                <div className="mt-[26px] flex pl-[71px]">
                  <FormLabel>แผนก</FormLabel>
                  <div className="flex h-[31px] w-[144px] justify-end border-2 border-t-[#5f7f9f] border-r-[#d3e4f4] border-b-[#d3e4f4] border-l-[#5f7f9f] bg-white">
                    <span className="flex h-full w-[16px] items-center justify-center border-r border-b border-[#666] bg-[#e8e8e8]">
                      <span className="border-x-[4px] border-t-[4px] border-x-transparent border-t-black" />
                    </span>
                  </div>
                </div>
                <div className="mt-[35px] flex pl-[24px]">
                  <FormButton>เพิ่มข้อมูล</FormButton>
                  <FormButton className="ml-[25px]">ลบข้อมูล</FormButton>
                  <FormButton className="ml-[17px]">Update</FormButton>
                </div>
              </div>
              <div className="ml-[24px] flex flex-col gap-[25px] pt-[40px]">
                <FormButton>ค้นหา</FormButton>
                <FormButton>ล้างข้อมูล</FormButton>
                <FormButton className="mt-[8px]">ยกเลิก</FormButton>
              </div>
            </div>
          </div>
        </div>
      </div>
    </div>
  );
}

function VbaWindow() {
  return (
    <div className="absolute top-[111px] left-[760px] flex h-[910px] w-[1124px] flex-col border-t border-[#555] bg-[#f5f6f7] shadow-[1px_1px_4px_rgba(0,0,0,0.6)]">
      <VbaChrome />
      <div className="flex min-h-0 flex-1">
        <div className="flex w-[327px] shrink-0 flex-col bg-[#f0f0f0]">
          <ProjectPane />
          <PropertiesPane />
        </div>
        <div className="w-[7px] shrink-0 bg-[#f0f0f0]" />
        <DesignSurface />
      </div>
    </div>
  );
}

export default function App() {
  return (
    <div className="relative h-[1080px] w-[1920px] overflow-hidden bg-[#1d1229] [font-family:'Liberation_Sans','Noto_Sans',sans-serif]">
      <div className="relative flex h-[1076px] w-[1916px] flex-col">
        <TitleBar />
        <TabStrip />
        <Ribbon />
        <FormulaBar />
        <SpreadSheet />
        <SheetTabs />
        <StatusBar />
        {/* Form button floating on the sheet, mostly behind the editor window */}
        <div className="absolute top-[260px] left-[712px] flex h-[60px] w-[120px] items-center border-b-2 border-[#999] bg-[#ebebeb] pl-[27px] text-[14px] text-[#333]">เพิ่มข้อมูล</div>
        <VbaWindow />
        {/* Screen recorder pointer highlight */}
        <div className="absolute top-[380px] left-[1575px] h-[66px] w-[66px] rounded-full bg-[#ffff7a]/50" />
        <svg className="absolute top-[413px] left-[1607px]" width="26" height="38" viewBox="0 0 26 38">
          <path d="M1 1v29l7-6 5 12 6-3-5-11h9z" fill="#fff" stroke="#000" strokeWidth="1.500" />
        </svg>
      </div>
    </div>
  );
}
